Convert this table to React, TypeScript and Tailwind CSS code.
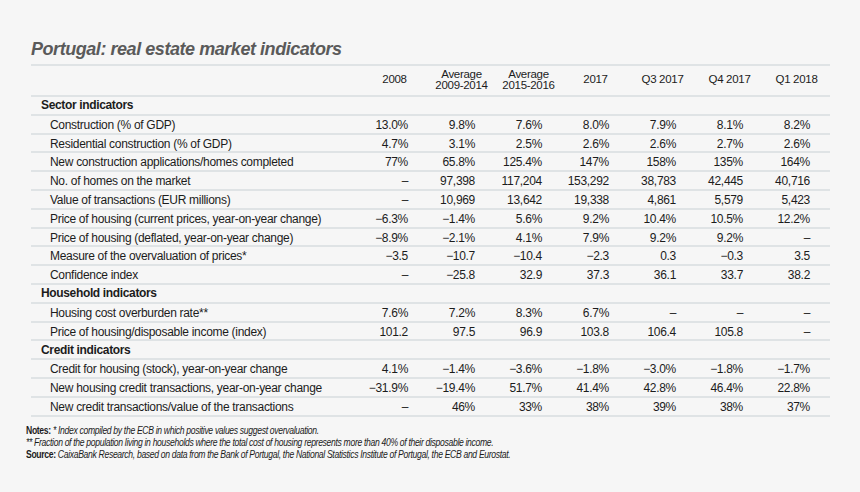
import React from "react";

// Portugal: real estate market indicators — static table

type Row =
  | { kind: "section"; label: string }
  | { kind: "item"; label: string; values: string[] };

const COLUMNS: string[][] = [
  ["2008"],
  ["Average", "2009-2014"],
  ["Average", "2015-2016"],
  ["2017"],
  ["Q3 2017"],
  ["Q4 2017"],
  ["Q1 2018"],
];

const D = "–";

const ROWS: Row[] = [
  { kind: "section", label: "Sector indicators" },
  { kind: "item", label: "Construction (% of GDP)", values: ["13.0%", "9.8%", "7.6%", "8.0%", "7.9%", "8.1%", "8.2%"] },
  { kind: "item", label: "Residential construction (% of GDP)", values: ["4.7%", "3.1%", "2.5%", "2.6%", "2.6%", "2.7%", "2.6%"] },
  { kind: "item", label: "New construction applications/homes completed", values: ["77%", "65.8%", "125.4%", "147%", "158%", "135%", "164%"] },
  { kind: "item", label: "No. of homes on the market", values: [D, "97,398", "117,204", "153,292", "38,783", "42,445", "40,716"] },
  { kind: "item", label: "Value of transactions (EUR millions)", values: [D, "10,969", "13,642", "19,338", "4,861", "5,579", "5,423"] },
  { kind: "item", label: "Price of housing (current prices, year-on-year change)", values: ["−6.3%", "−1.4%", "5.6%", "9.2%", "10.4%", "10.5%", "12.2%"] },
  { kind: "item", label: "Price of housing (deflated, year-on-year change)", values: ["−8.9%", "−2.1%", "4.1%", "7.9%", "9.2%", "9.2%", D] },
  { kind: "item", label: "Measure of the overvaluation of prices*", values: ["−3.5", "−10.7", "−10.4", "−2.3", "0.3", "−0.3", "3.5"] },
  { kind: "item", label: "Confidence index", values: [D, "−25.8", "32.9", "37.3", "36.1", "33.7", "38.2"] },
  { kind: "section", label: "Household indicators" },
  { kind: "item", label: "Housing cost overburden rate**", values: ["7.6%", "7.2%", "8.3%", "6.7%", D, D, D] },
  { kind: "item", label: "Price of housing/disposable income (index)", values: ["101.2", "97.5", "96.9", "103.8", "106.4", "105.8", D] },
  { kind: "section", label: "Credit indicators" },
  { kind: "item", label: "Credit for housing (stock), year-on-year change", values: ["4.1%", "−1.4%", "−3.6%", "−1.8%", "−3.0%", "−1.8%", "−1.7%"] },
  { kind: "item", label: "New housing credit transactions, year-on-year change", values: ["−31.9%", "−19.4%", "51.7%", "41.4%", "42.8%", "46.4%", "22.8%"] },
  { kind: "item", label: "New credit transactions/value of the transactions", values: [D, "46%", "33%", "38%", "39%", "38%", "37%"] },
];

const GRID = "grid grid-cols-[330px_repeat(7,67px)]";

export default function App() {
  return (
    <div className="w-[860px] h-[492px] bg-[#f6f6f6] text-[#1c1c1c] font-['Liberation_Sans',Arial,sans-serif] overflow-hidden">
      <div className="pl-[31px] pt-[38px]">
        {/* タイトル */}
        <h1 className="text-[18px] leading-[22px] font-bold italic text-[#5a5a5a] tracking-[-0.45px] mb-[4px]">
          Portugal: real estate market indicators
        </h1>

        <div className="w-[799px]">
          {/* ヘッダー */}
          <div className={`${GRID} h-[33px] border-y-2 border-[#dfe3e5] text-[11.5px] tracking-[-0.3px]`}>
            <div />
            {COLUMNS.map((c, i) => (
              <div key={i} className="flex flex-col items-center justify-center leading-[10.5px] pb-[2px]">
                {c.map((t) => (
                  <span key={t}>{t}</span>
                ))}
              </div>
            ))}
          </div>

          {/* 本体 */}
          {ROWS.map((r, i) =>
            r.kind === "section" ? (
              <div key={i} className="h-[18.8px] border-b-2 border-[#dfe3e5] flex items-center pl-[10px] text-[12px] font-bold tracking-[-0.35px]">
                {r.label}
              </div>
            ) : (
              <div key={i} className={`${GRID} h-[18.8px] border-b-2 border-[#dfe3e5] items-center text-[12px] tracking-[-0.3px]`}>
                <div className="pl-[19px] whitespace-nowrap">{r.label}</div>
                {r.values.map((v, j) => (
                  <div key={j} className="text-right pr-[20px]">{v}</div>
                ))}
              </div>
            )
          )}
        </div>

        {/* 注記 */}
        <div className="-ml-[5px] mt-[7px] w-[720px] origin-left scale-x-[0.82] text-[10.5px] leading-[12.4px] italic tracking-[-0.4px] text-[#1c1c1c] whitespace-nowrap">
          <p>
            <span className="font-bold not-italic">Notes:</span> * Index compiled by the ECB in which positive values suggest overvaluation.
          </p>
          <p>** Fraction of the population living in households where the total cost of housing represents more than 40% of their disposable income.</p>
          <p>
            <span className="font-bold not-italic">Source:</span> CaixaBank Research, based on data from the Bank of Portugal, the National Statistics Institute of Portugal, the ECB and Eurostat.
          </p>
        </div>
      </div>
    </div>
  );
}
